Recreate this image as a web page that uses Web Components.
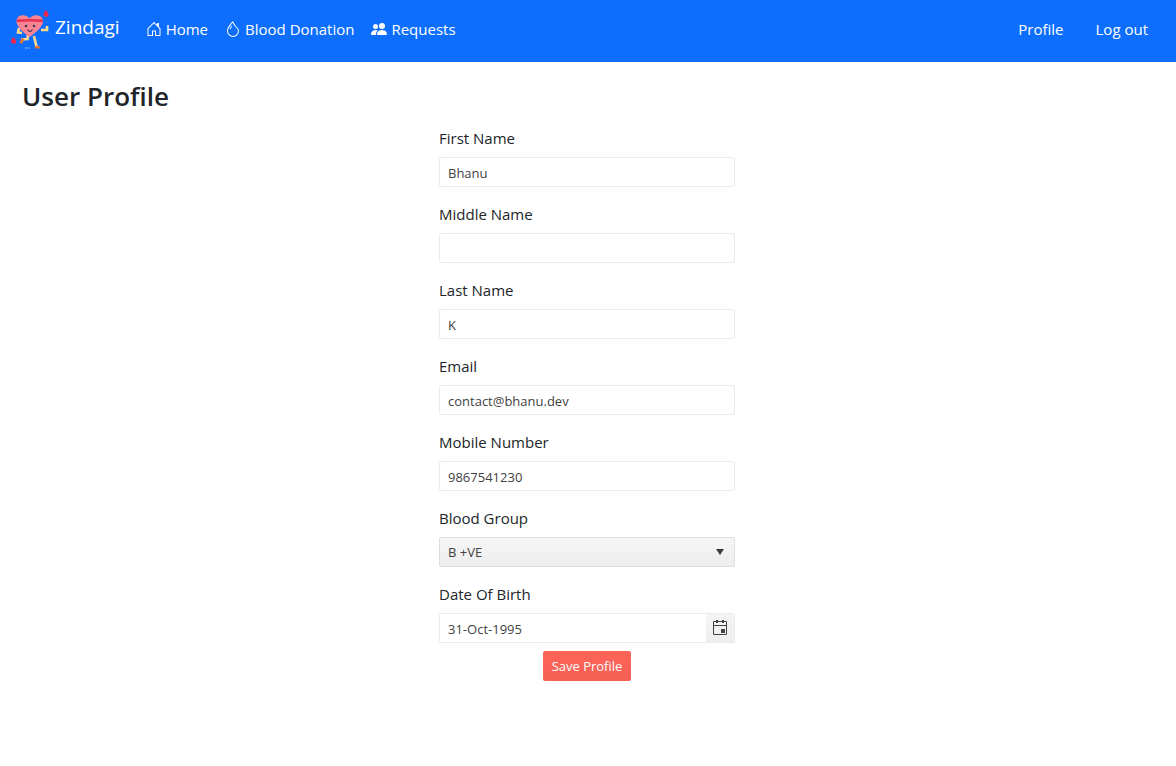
<!DOCTYPE html>
<html lang="en">
<head>
<meta charset="utf-8">
<meta name="viewport" content="width=device-width, initial-scale=1">
<title>Zindagi - User Profile</title>
<style>
body { margin: 0; background: #fff; color: #212529; font: 15px/24px "Open Sans", "Noto Sans", sans-serif; }
</style>
</head>
<body>
<user-profile-page></user-profile-page>
<script>
function define(name, markup, setup) {
  const template = document.createElement('template');
  template.innerHTML = markup;
  customElements.define(name, class extends HTMLElement {
    constructor() {
      super();
      this.attachShadow({ mode: 'open' }).append(template.content.cloneNode(true));
    }
    connectedCallback() { if (setup) setup(this, this.shadowRoot); }
  });
}

define('brand-logo', `
<style>:host { display: block; width: 40px; height: 40px; } svg { display: block; }</style>
<svg width="40" height="40" viewBox="0 0 40 40" aria-hidden="true">
  <g fill="none" stroke="#ffd98a" stroke-width="2.6">
    <path d="M9 19L8 23.500L12 24"/><path d="M31 21H37V17"/>
    <path d="M18 26L17.500 30L11 30.500"/><path d="M24 27L26.500 37.500"/>
  </g>
  <path d="M11.500 29L14 30L12.500 34.500L9.500 34Z" fill="#e8732c"/>
  <path d="M25 37H29.500L30 39.500H24.500Z" fill="#e8732c"/>
  <path d="M19.500 28C15 25 6.500 18 6.500 12.500C6.500 5 16 4.500 19.500 9.500C23 4.500 33 5 33 12.500C33 18 24 25 19.500 28Z" fill="#fb8392"/>
  <path d="M7 10.500Q20 9.500 32.500 10.500L32.800 13Q20 12 6.600 13Z" fill="#e72f50"/>
  <g fill="#38395e"><circle cx="16" cy="17" r="1.300"/><circle cx="24" cy="17" r="1.300"/></g>
  <path d="M17.500 20.500Q20 24.500 22.500 20.500" fill="none" stroke="#38395e" stroke-width="1.200"/>
  <g fill="#ed2850"><path d="M36 1Q40 5.500 38 7.500Q35.500 8.500 33.500 6.500Q33 4 36 1Z"/><path d="M3.500 28Q7.500 32 5.500 34.500Q3 35.500 1 33.500Q.5 31 3.500 28Z"/></g>
  <path d="M15 39h2.500M18.500 39h1.500" stroke="#a7b8df" stroke-width="1.200"/>
</svg>`);

define('nav-item', `
<style>
:host { display: block; }
a { display: flex; align-items: center; gap: 4px; padding: 8px; color: #fff; text-decoration: none; white-space: nowrap; }
::slotted(svg) { width: 16px; height: 16px; fill: currentColor; }
</style>
<a><slot name="icon"></slot><slot></slot></a>`, (host, root) => {
  root.querySelector('a').href = host.getAttribute('href');
});

define('app-navbar', `
<style>
:host { display: block; background: #0d6efd; color: #fff; }
nav { display: flex; align-items: center; min-height: 62px; padding: 0 20px 4px 10px; box-sizing: border-box; }
.brand { display: flex; align-items: center; gap: 5px; margin-right: 18px; color: #fff; font-size: 19px; line-height: 30px; text-decoration: none; }
.brand span { padding-bottom: 4px; }
.links, .account { display: flex; align-items: center; }
.links { gap: 1px; }
.account { margin-left: auto; gap: 16px; }
</style>
<nav aria-label="Main">
  <a class="brand" href="#"><brand-logo></brand-logo><span>Zindagi</span></a>
  <div class="links">
    <nav-item href="#home"><svg slot="icon" viewBox="0 0 16 16" aria-hidden="true"><path d="M8.354 1.146a.5.5 0 0 0-.708 0l-6 6A.5.5 0 0 0 1.500 7.500v7a.5.5 0 0 0 .5.5h4.500a.5.5 0 0 0 .5-.5v-4h2v4a.5.5 0 0 0 .5.5H14a.5.5 0 0 0 .5-.5v-7a.5.5 0 0 0-.146-.354L13 5.793V2.500a.5.5 0 0 0-.5-.5h-1a.5.5 0 0 0-.5.5v1.293L8.354 1.146zM2.500 14V7.707l5.500-5.500 5.500 5.500V14H10v-4a.5.5 0 0 0-.5-.5h-3a.5.5 0 0 0-.5.5v4H2.500z"/></svg>Home</nav-item>
    <nav-item href="#donation"><svg slot="icon" viewBox="0 0 16 16" aria-hidden="true"><path fill-rule="evenodd" d="M7.210.8C7.690.295 8 0 8 0c.109.363.234.708.371 1.038.812 1.946 2.073 3.350 3.197 4.600C12.878 7.096 14 8.345 14 10a6 6 0 0 1-12 0C2 6.668 5.580 2.517 7.210.8zm.413 1.021A31.250 31.250 0 0 0 5.794 3.990c-.726.950-1.436 2.008-1.960 3.070C3.304 8.133 3 9.138 3 10a5 5 0 0 0 10 0c0-1.201-.796-2.157-2.181-3.700l-.030-.032C9.750 5.110 8.500 3.720 7.623 1.820z"/><path fill-rule="evenodd" d="M4.553 7.776c.820-1.641 1.717-2.753 2.093-3.130l.708.708c-.290.290-1.128 1.311-1.907 2.870l-.894-.448z"/></svg>Blood Donation</nav-item>
    <nav-item href="#requests"><svg slot="icon" viewBox="0 0 16 16" aria-hidden="true"><path d="M7 14s-1 0-1-1 1-4 5-4 5 3 5 4-1 1-1 1H7zm4-6a3 3 0 1 0 0-6 3 3 0 0 0 0 6z"/><path d="M5.216 14A2.238 2.238 0 0 1 5 13c0-1.355.68-2.750 1.936-3.720A6.325 6.325 0 0 0 5 9c-4 0-5 3-5 4s1 1 1 1h4.216z"/><path d="M4.500 8a2.500 2.500 0 1 0 0-5 2.500 2.500 0 0 0 0 5z"/></svg>Requests</nav-item>
  </div>
  <div class="account"><nav-item href="#profile">Profile</nav-item><nav-item href="#logout">Log out</nav-item></div>
</nav>`);

const fieldStyle = `
:host { display: block; }
label { display: block; margin-bottom: 8px; line-height: 22px; }
input, select { box-sizing: border-box; width: 100%; height: 30px; margin: 0; padding: 2px 8px 0; border: 1px solid #ebebeb; border-radius: 2px; background: #fff; color: #424242; font: 13px/20px "Open Sans", "Noto Sans", sans-serif; outline-color: #0d6efd; }`;

define('text-field', `
<style>${fieldStyle}</style>
<label for="control"></label><input id="control" type="text">`, (host, root) => {
  root.querySelector('label').textContent = host.getAttribute('label');
  const input = root.querySelector('input');
  input.type = host.getAttribute('type') || 'text';
  input.value = host.getAttribute('value') || '';
});

define('blood-group-field', `
<style>${fieldStyle}
.box { display: grid; align-items: center; }
select, svg { grid-area: 1 / 1; }
select { appearance: none; padding: 0 28px 0 8px; border-color: #dedede; background: linear-gradient(#f5f5f5, #eee); }
svg { justify-self: end; margin-right: 10px; fill: #373940; pointer-events: none; }
</style>
<label for="control">Blood Group</label>
<div class="box">
  <select id="control"><option>A +VE</option><option>A -VE</option><option selected>B +VE</option><option>B -VE</option><option>AB +VE</option><option>AB -VE</option><option>O +VE</option><option>O -VE</option></select>
  <svg width="10" height="6" viewBox="0 0 10 6" aria-hidden="true"><path d="M1 0H9L5 6Z"/></svg>
</div>`);

define('date-field', `
<style>${fieldStyle}
.box { display: flex; box-sizing: border-box; height: 30px; border: 1px solid #ebebeb; border-radius: 2px; overflow: hidden; }
input { flex: 1; min-width: 0; height: 28px; border: 0; }
button { display: grid; place-items: center; width: 28px; padding: 0 0 2px; border: 0; background: linear-gradient(#f5f5f5, #eee); color: #424242; }
</style>
<label for="control">Date Of Birth</label>
<div class="box">
  <input id="control" type="text" value="31-Oct-1995">
  <button type="button" aria-label="Open calendar"><svg width="16" height="16" viewBox="0 0 16 16" aria-hidden="true"><path d="M1.500 2.500H14.500V15.500H1.500ZM1.500 6.500H14.500" fill="none" stroke="currentColor"/><path d="M4 1h2v3H4zM10 1h2v3h-2zM9 10h4v4H9z" fill="currentColor"/></svg></button>
</div>`);

define('save-button', `
<style>
:host { display: block; }
button { height: 30px; padding: 0 9px; border: 0; border-radius: 2px; background: linear-gradient(#ff6358, #f56055); color: #fff; font: 13px/20px "Open Sans", "Noto Sans", sans-serif; }
</style>
<button type="submit"><slot></slot></button>`);

define('user-profile-page', `
<style>
:host { display: block; }
main { padding: 16px 24px 24px 22px; }
h1 { margin: 0 0 13px; font-size: 26px; line-height: 36px; font-weight: 600; }
form { display: flex; flex-direction: column; gap: 16px; max-width: 296px; margin: 0 auto; }
.last { display: flex; flex-direction: column; gap: 8px; }
save-button { align-self: center; }
</style>
<app-navbar></app-navbar>
<main>
  <h1>User Profile</h1>
  <form>
    <text-field label="First Name" value="Bhanu"></text-field>
    <text-field label="Middle Name"></text-field>
    <text-field label="Last Name" value="K"></text-field>
    <text-field label="Email" type="email" value="contact@bhanu.dev"></text-field>
    <text-field label="Mobile Number" type="tel" value="9867541230"></text-field>
    <blood-group-field></blood-group-field>
    <div class="last"><date-field></date-field><save-button>Save Profile</save-button></div>
  </form>
</main>`);
</script>
</body>
</html>
